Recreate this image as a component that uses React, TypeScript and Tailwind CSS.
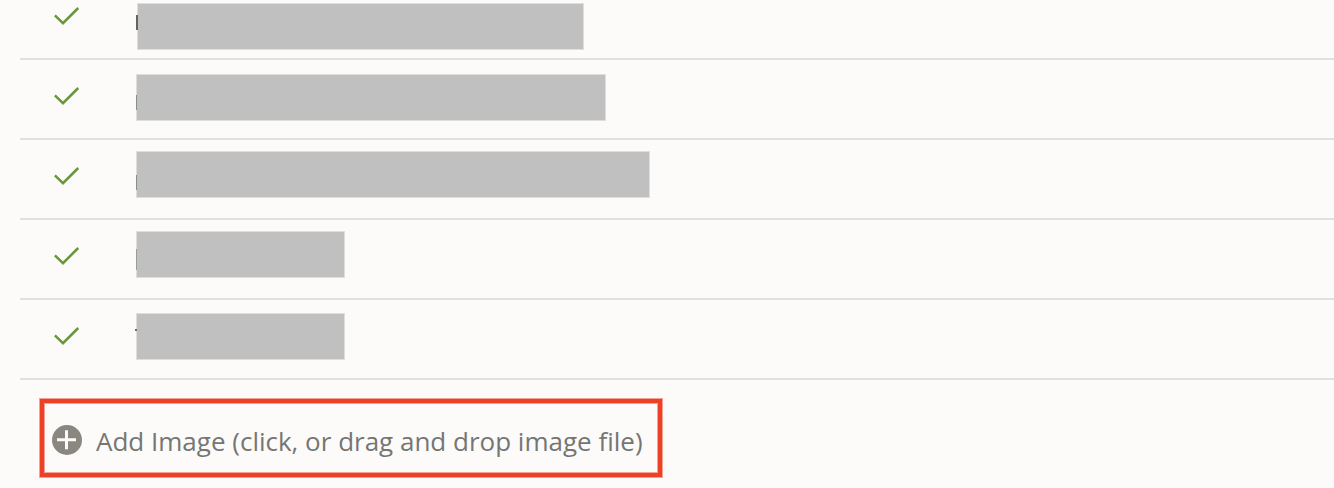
type Row = {
  block: string;
  glyph: string;
};

const rows: Row[] = [
  { block: 'ml-px mt-[23px] w-[447px]', glyph: 'left-[-1px] top-[12px] h-[15px] w-[2px] bg-[#626464]' },
  { block: 'mt-[14px] w-[470px]', glyph: 'left-0 top-[21px] h-[15px] w-px bg-[#8b8d8d]' },
  { block: 'mt-[11px] w-[514px]', glyph: 'left-0 top-[24px] h-[15px] w-px bg-[#8b8d8d]' },
  { block: 'mt-[11px] w-[209px]', glyph: 'left-0 top-[18px] h-[21px] w-px bg-[#9b9c9c]' },
  { block: 'mt-[13px] w-[209px]', glyph: 'left-[-1px] top-[16px] h-[2px] w-[2px] bg-[#6b6d6d]' },
];

function CheckIcon() {
  return (
    <svg className="ml-8 mt-[22px] h-8 w-8 shrink-0" viewBox="0 0 32 32" fill="none">
      <path d="M2.9 13.4 11 21.2 26.2 6" stroke="#6a963b" strokeWidth="2.5" />
    </svg>
  );
}

function AddIcon() {
  return (
    <svg className="h-[30px] w-[30px] shrink-0" viewBox="0 0 30 30">
      <circle cx="15" cy="15" r="15" fill="#8a8780" />
      <path d="M5 14.8h19M14.5 5.3v19" stroke="#fcfbfa" strokeWidth="3" />
    </svg>
  );
}

export default function App() {
  return (
    <main className="flex h-[488px] w-full flex-col overflow-hidden bg-[#fcfbfa]">
      <ul className="-mt-5 ml-5 flex flex-col">
        {rows.map((row, i) => (
          <li key={i} className="flex h-20 items-start border-b-2 border-[#dfe1df]">
            <CheckIcon />
            <div className="ml-[52px]">
              <div className={`relative h-[47px] border border-[#dededc] bg-[#c0c0c0] bg-clip-padding ${row.block}`}>
                <span className={`absolute -ml-px -mt-px ${row.glyph}`} />
              </div>
            </div>
          </li>
        ))}
      </ul>
      <button
        type="button"
        className="ml-[39px] mt-[18px] flex h-20 w-[624px] items-center border border-[#f5a294] pl-3 pt-[3px] shadow-[inset_0_0_0_4px_#ee4026,inset_0_0_0_5px_#f5a294]"
      >
        <AddIcon />
        <span className="ml-[14px] mt-[2px] whitespace-nowrap font-['Open_Sans','Noto_Sans',sans-serif] text-[26px] leading-[36px] text-[#757673]">
          Add Image (click, or drag and drop image file)
        </span>
      </button>
    </main>
  );
}
